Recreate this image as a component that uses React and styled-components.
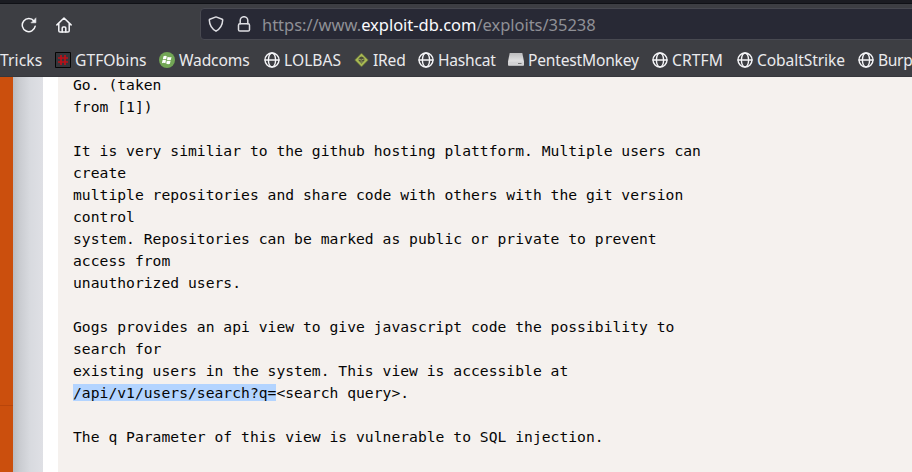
import React from "react";
import styled, { createGlobalStyle } from "styled-components";

const GlobalStyle = createGlobalStyle`
  * { box-sizing: border-box; }
  html, body { margin: 0; padding: 0; overflow: hidden; }
`;

const Window = styled.div`
  width: 912px;
  height: 472px;
  display: flex;
  flex-direction: column;
  overflow: hidden;
  background: #3d3e43;
`;

const TabStrip = styled.div`
  flex: none;
  height: 4px;
  background: #1b1c22;
  border-bottom: 1px solid #101116;
`;

const NavBar = styled.div`
  flex: none;
  height: 40px;
  display: flex;
  padding: 4px 0 0 20px;
`;

const NavButton = styled.div`
  flex: none;
  width: 18px;
  height: 33px;
  display: flex;
  align-items: center;
  justify-content: center;
  margin-right: ${(p) => p.$after}px;
`;

const AddressBar = styled.div`
  flex: none;
  width: 730px;
  height: 32px;
  display: flex;
  align-items: center;
  padding-left: 7px;
  background: #282935;
  border: 1px solid #484951;
  border-radius: 4px;
`;

const AddressIcon = styled.span`
  display: flex;
  width: 16px;
  margin-right: ${(p) => p.$after}px;
`;

const Url = styled.span`
  padding-top: 2px;
  color: #8f9096;
  font: 16.5px/24px "Noto Sans", sans-serif;
  letter-spacing: -0.03px;
  white-space: nowrap;
`;

const Domain = styled.span`
  color: #fbfbfe;
`;

const BookmarksBar = styled.div`
  flex: none;
  height: 33px;
  display: flex;
  overflow: hidden;
  border-bottom: 1px solid #36373c;
`;

const Bookmark = styled.div`
  flex: none;
  width: ${(p) => p.$width}px;
  height: 32px;
  display: flex;
  align-items: center;
  gap: 4px;
  color: #eaeaed;
  font: 15.6px/24px "Noto Sans", sans-serif;
  letter-spacing: ${(p) => p.$tracking || 0}px;
  white-space: nowrap;

  svg { flex: none; }
`;

const Page = styled.div`
  flex: 1;
  min-height: 0;
  display: flex;
  background: #fff;
`;

const Sidebar = styled.div`
  flex: none;
  width: 13px;
  background: #cb4f0d;
`;

const SidebarDivider = styled.div`
  height: 329px;
  border-bottom: 1px solid #b9450a;
`;

const Gutter = styled.div`
  flex: none;
  width: 30px;
  margin-right: 15px;
  background: linear-gradient(90deg, #b9bbc0 0, #caccd1 7px, #d8dadf 17px, #dfe0e5 30px);
`;

const Advisory = styled.pre`
  flex: 1;
  margin: 0;
  padding-left: 15px;
  overflow: hidden;
  background: #f5f1ee;
  color: #050505;
  font: 14.667px/22px "DejaVu Sans Mono", monospace;
  letter-spacing: 0.02px;
`;

const AdvisoryText = styled.code`
  display: block;
  margin-top: -3px;
  font: inherit;
`;

const Selected = styled.span`
  background: #b3d4ff;
`;

const stroke = {
  fill: "none",
  stroke: "#f5f5f8",
  strokeWidth: 1.5,
  strokeLinecap: "round",
  strokeLinejoin: "round",
};

const ReloadIcon = () => (
  <svg width="16" height="16" viewBox="0 0 16 16" {...stroke}>
    <path d="M14.2 9.2A6.5 6.5 0 1 1 13 4.2" />
    <path d="M10.3 5.8h4.6V1.2z" fill="#f5f5f8" strokeWidth=".6" />
  </svg>
);

const HomeIcon = () => (
  <svg width="16" height="16" viewBox="0 0 16 16" {...stroke}>
    <path d="M.9 7.9 8 1l7.1 6.9M2.8 6.5v7.2q0 1.3 1.3 1.3h7.8q1.3 0 1.3-1.3V6.5" />
    <path d="M6.2 15v-4q0-1 1-1h1.6q1 0 1 1v4" />
  </svg>
);

const ShieldIcon = () => (
  <svg width="16" height="16" viewBox="0 0 16 16" {...stroke} stroke="#dedee3">
    <path d="M8 .9 14.2 3.2q.5.2.5.8Q14.4 11.5 8 15.2 1.6 11.5 1.3 4q0-.6.5-.8z" />
  </svg>
);

const LockIcon = () => (
  <svg width="16" height="16" viewBox="0 0 16 16" {...stroke} stroke="#dedee3">
    <path d="M4.2 7.8V4.5a3.8 3.8 0 0 1 7.6 0v3.3" />
    <rect x="2.5" y="7.8" width="11" height="7.3" rx="1.4" />
  </svg>
);

const GlobeIcon = () => (
  <svg width="16" height="16" viewBox="0 0 16 16" {...stroke} strokeWidth="1.4">
    <circle cx="8" cy="8" r="7" />
    <ellipse cx="8" cy="8" rx="3.6" ry="7" />
    <path d="M1 8h14" />
  </svg>
);

const HashIcon = () => (
  <svg width="16" height="16" viewBox="0 0 16 16">
    <path d="M.5.5h15v15H.5z" fill="#35363b" stroke="#050505" />
    <path d="M6 3v10M10 3v10M3 6h10M3 10h10" stroke="#bc1018" strokeWidth="1.7" />
  </svg>
);

const WindowsIcon = () => (
  <svg width="16" height="16" viewBox="0 0 16 16">
    <circle cx="8" cy="8" r="8" fill="#72a655" />
    <path
      d="M4.5 4.2Q6.3 3.3 7.8 4.3L7.2 7.3Q5.6 6.5 3.8 7.3zM8.6 4.7Q10.7 5.7 12.5 4.9L11.8 8Q9.8 8.7 8 7.7zM3.6 8.1Q5.4 7.4 7 8.2L6.4 11.2Q4.8 10.4 2.9 11.2zM7.8 8.6Q9.7 9.5 11.6 8.8L10.9 11.8Q9 12.7 7.2 11.6z"
      fill="#fff"
    />
  </svg>
);

const DiamondIcon = () => (
  <svg width="15" height="16" viewBox="0 0 15 16">
    <path d="M7.5 1 14.4 8l-6.9 7L.6 8z" fill="#a8b952" stroke="#4b5238" strokeWidth=".7" />
    <path d="M4.7 6.2q2.8-3.4 5.6 0v2.3l-2.8 3.2-2.8-3.2z" fill="#4d5038" />
    <path d="m5 7 2.2 1.2L9.8 7M6.4 10h2.4" stroke="#a0a568" fill="none" />
  </svg>
);

const DriveIcon = () => (
  <svg width="16" height="16" viewBox="0 0 16 16">
    <defs>
      <linearGradient id="driveTop" x2="0" y2="1">
        <stop stopColor="#bcbcbe" />
        <stop offset="1" stopColor="#f5f5f5" />
      </linearGradient>
    </defs>
    <path d="M1.7 1h12.6L16 9.5v3.2q0 .8-.8.8H.8q-.8 0-.8-.8V9.5z" fill="url(#driveTop)" />
    <path d="M0 9.5h16v3.2q0 .8-.8.8H.8q-.8 0-.8-.8z" fill="#d3d3d5" />
    <path d="M10 11.5h3.5" stroke="#777" />
  </svg>
);

const bookmarks = [
  { label: "GTFObins", width: 104, tracking: 0.08, Icon: HashIcon },
  { label: "Wadcoms", width: 105, tracking: -0.15, Icon: WindowsIcon },
  { label: "LOLBAS", width: 90, tracking: 0.05, Icon: GlobeIcon },
  { label: "IRed", width: 64, tracking: -0.2, Icon: DiamondIcon },
  { label: "Hashcat", width: 90, tracking: -0.25, Icon: GlobeIcon },
  { label: "PentestMonkey", width: 144, tracking: -0.2, Icon: DriveIcon },
  { label: "CRTFM", width: 85, tracking: 0.1, Icon: GlobeIcon },
  { label: "CobaltStrike", width: 121, tracking: -0.1, Icon: GlobeIcon },
  { label: "Burp", width: 54, tracking: -0.35, Icon: GlobeIcon },
];

const intro = `Go. (taken
from [1])

It is very similiar to the github hosting plattform. Multiple users can
create
multiple repositories and share code with others with the git version
control
system. Repositories can be marked as public or private to prevent
access from
unauthorized users.

Gogs provides an api view to give javascript code the possibility to
search for
existing users in the system. This view is accessible at
`;

const outro = `<search query>.

The q Parameter of this view is vulnerable to SQL injection.`;

export default function App() {
  return (
    <Window>
      <GlobalStyle />
      <TabStrip />
      <NavBar>
        <NavButton $after={17}><ReloadIcon /></NavButton>
        <NavButton $after={127}><HomeIcon /></NavButton>
        <AddressBar>
          <AddressIcon $after={12}><ShieldIcon /></AddressIcon>
          <AddressIcon $after={10}><LockIcon /></AddressIcon>
          <Url>https://www.<Domain>exploit-db.com</Domain>/exploits/35238</Url>
        </AddressBar>
      </NavBar>
      <BookmarksBar>
        <Bookmark $width={55} $tracking={0.1}>Tricks</Bookmark>
        {bookmarks.map(({ label, width, tracking, Icon }) => (
          <Bookmark key={label} $width={width} $tracking={tracking}>
            <Icon />
            {label}
          </Bookmark>
        ))}
      </BookmarksBar>
      <Page>
        <Sidebar><SidebarDivider /></Sidebar>
        <Gutter />
        <Advisory>
          <AdvisoryText>
            {intro}<Selected>/api/v1/users/search?q=</Selected>{outro}
          </AdvisoryText>
        </Advisory>
      </Page>
    </Window>
  );
}
